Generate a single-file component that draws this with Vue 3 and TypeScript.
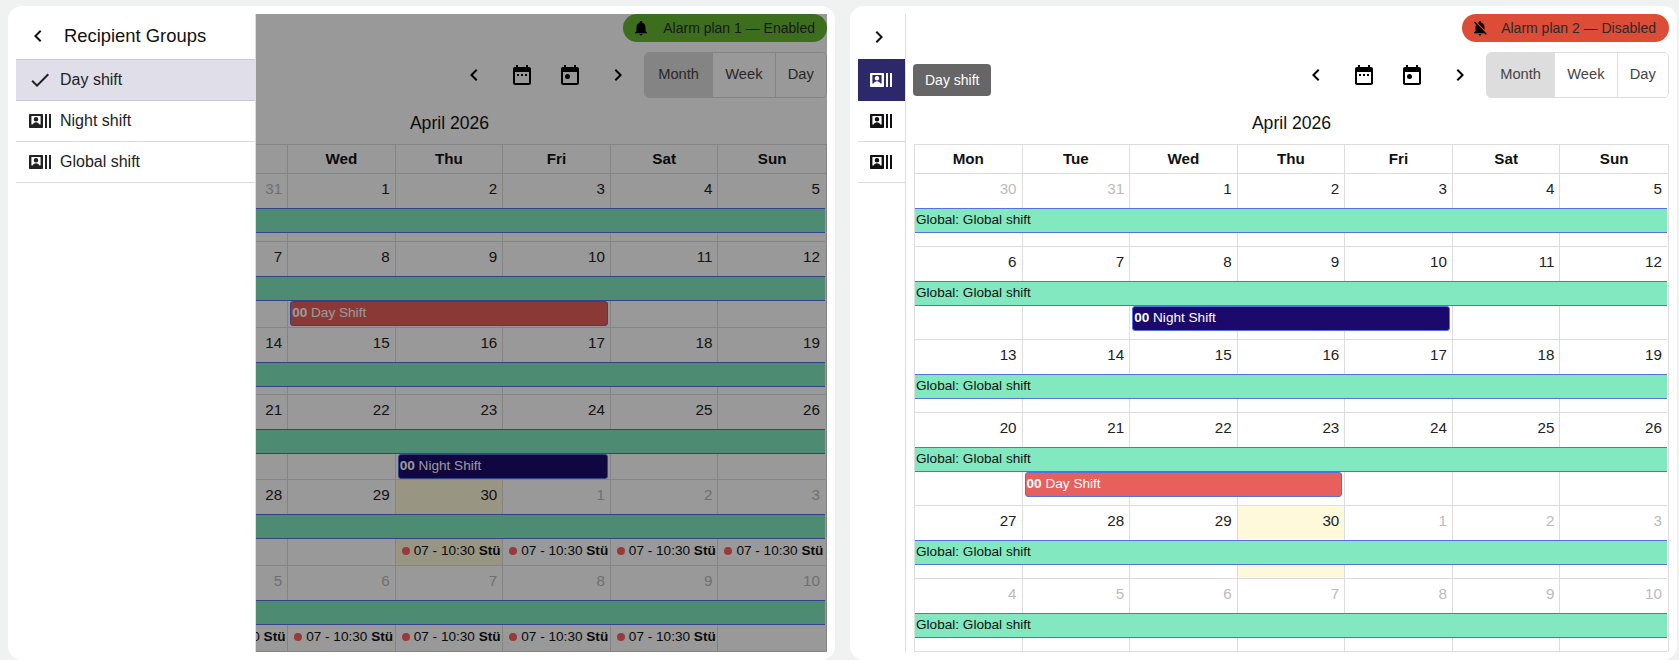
<script setup lang="ts">
interface Bar { start: number; end: number; label: string; tone: 'day' | 'night' }
interface Tick { col: number }
interface Week { height: number; days: { n: number; muted: boolean; today: boolean }[]; bars: Bar[]; ticks: Tick[] }
interface Plan { id: number; enabled: boolean; chip: string; tooltip: string; drawer: boolean; weeks: Week[] }

const ICONS = {
  back: 'M15.41 7.41L14 6l-6 6 6 6 1.41-1.41L10.83 12z',
  next: 'M10 6L8.59 7.41 13.17 12l-4.58 4.59L10 18l6-6z',
  actors: 'M21 5v14h2V5zM17 5v14h2V5zM14 5H2c-.55 0-1 .45-1 1v12c0 .55.45 1 1 1h12c.55 0 1-.45 1-1V6c0-.55-.45-1-1-1zM3.4 7h9.2v8.6H3.4zM8 7.9a2.3 2.3 0 1 1 0 4.6 2.3 2.3 0 0 1 0-4.6zM4.6 15.6c0-1.4 2.2-2.4 3.4-2.4s3.4 1 3.4 2.4z',
  check: 'M9 16.17L4.83 12l-1.41 1.41L9 19 21 7l-1.41-1.41z',
  range: 'M9 11H7v2h2v-2zm4 0h-2v2h2v-2zm4 0h-2v2h2v-2zm2-7h-1V2h-2v2H8V2H6v2H5c-1.11 0-1.99.9-1.99 2L3 20c0 1.1.89 2 2 2h14c1.1 0 2-.9 2-2V6c0-1.1-.9-2-2-2zm0 16H5V9h14v11z',
  today: 'M19 4h-1V2h-2v2H8V2H6v2H5c-1.11 0-1.99.9-1.99 2L3 20c0 1.1.89 2 2 2h14c1.1 0 2-.9 2-2V6c0-1.1-.9-2-2-2zm0 16H5V9h14v11zM9.5 11a2.5 2.5 0 1 0 0 5 2.5 2.5 0 0 0 0-5z',
  bell: 'M12 22c1.1 0 2-.9 2-2h-4c0 1.1.89 2 2 2zm6-6v-5c0-3.07-1.64-5.64-4.5-6.32V4c0-.83-.67-1.5-1.5-1.5s-1.5.67-1.5 1.5v.68C7.63 5.36 6 7.92 6 11v5l-2 2v1h16v-1l-2-2z',
  bellOff: 'M20 18.69L7.84 6.14 5.27 3.49 4 4.76l2.8 2.8v.01c-.52.99-.8 2.16-.8 3.42v5l-2 2v1h13.73l2 2L21 19.72l-1-1.03zM12 22c1.11 0 2-.89 2-2h-4c0 1.11.89 2 2 2zm6-7.32V11c0-3.08-1.64-5.64-4.5-6.32V4c0-.83-.67-1.5-1.5-1.5s-1.5.67-1.5 1.5v.68c-.15.03-.29.08-.42.12-.1.03-.2.07-.3.11h-.01c-.2.08-.4.17-.59.27-.01 0-.01 0-.02.01L18 14.68z',
}

const dayNames = ['Mon', 'Tue', 'Wed', 'Thu', 'Fri', 'Sat', 'Sun']
const groups = ['Day shift', 'Night shift', 'Global shift']
const views = ['Month', 'Week', 'Day']

function buildDays(): Week['days'][] {
  const out: Week['days'][] = []
  const prefix = [30, 31]
  const all: { n: number; muted: boolean; today: boolean }[] = prefix.map((n) => ({ n, muted: true, today: false }))
  for (let n = 1; n <= 30; n++) all.push({ n, muted: false, today: n === 30 })
  for (let n = 1; n <= 10; n++) all.push({ n, muted: true, today: false })
  for (let i = 0; i < 6; i++) out.push(all.slice(i * 7, i * 7 + 7))
  return out
}

const grid = buildDays()

function makeWeeks(heights: number[], bars: Record<number, Bar[]>, ticks: Record<number, number[]>): Week[] {
  return heights.map((height, i) => ({
    height,
    days: grid[i],
    bars: bars[i] ?? [],
    ticks: (ticks[i] ?? []).map((col) => ({ col })),
  }))
}

const plans: Plan[] = [
  {
    id: 1,
    enabled: true,
    chip: 'Alarm plan 1 — Enabled',
    tooltip: '',
    drawer: true,
    weeks: makeWeeks(
      [68, 86, 67, 85, 86, 86],
      {
        1: [{ start: 3, end: 6, label: 'Day Shift', tone: 'day' }],
        3: [{ start: 4, end: 6, label: 'Night Shift', tone: 'night' }],
      },
      { 4: [4, 5, 6, 7], 5: [1, 2, 3, 4, 5, 6] },
    ),
  },
  {
    id: 2,
    enabled: false,
    chip: 'Alarm plan 2 — Disabled',
    tooltip: 'Day shift',
    drawer: false,
    weeks: makeWeeks(
      [73, 93, 73, 93, 73, 73],
      {
        1: [{ start: 3, end: 6, label: 'Night Shift', tone: 'night' }],
        3: [{ start: 2, end: 5, label: 'Day Shift', tone: 'day' }],
      },
      {},
    ),
  },
]
</script>

<template>
  <div class="page">
    <section v-for="plan in plans" :key="plan.id" class="card">
      <aside class="rail">
        <div class="rail-head">
          <svg class="icon" viewBox="0 0 24 24"><path :d="ICONS.next" /></svg>
        </div>
        <div v-for="(g, i) in groups" :key="g" class="rail-row" :class="{ active: i === 0 }">
          <svg class="icon" viewBox="0 0 24 24"><path fill-rule="evenodd" :d="ICONS.actors" /></svg>
        </div>
      </aside>

      <div class="panel">
        <div class="chip-row">
          <div class="chip" :class="plan.enabled ? 'on' : 'off'">
            <svg class="chip-icon" viewBox="0 0 24 24"><path :d="plan.enabled ? ICONS.bell : ICONS.bellOff" /></svg>
            <span>{{ plan.chip }}</span>
          </div>
        </div>

        <div class="toolbar">
          <div v-if="plan.tooltip" class="tooltip">{{ plan.tooltip }}</div>
          <div class="nav">
            <button class="nav-btn"><svg class="icon" viewBox="0 0 24 24"><path :d="ICONS.back" /></svg></button>
            <button class="nav-btn"><svg class="icon" viewBox="0 0 24 24"><path :d="ICONS.range" /></svg></button>
            <button class="nav-btn"><svg class="icon" viewBox="0 0 24 24"><path :d="ICONS.today" /></svg></button>
            <button class="nav-btn"><svg class="icon" viewBox="0 0 24 24"><path :d="ICONS.next" /></svg></button>
          </div>
          <div class="views">
            <button v-for="(v, i) in views" :key="v" class="view" :class="{ selected: i === 0 }">{{ v }}</button>
          </div>
        </div>

        <div class="title">April 2026</div>

        <div class="calendar">
          <div class="head">
            <div v-for="d in dayNames" :key="d" class="head-cell">{{ d }}</div>
          </div>
          <div v-for="(week, w) in plan.weeks" :key="w" class="week" :style="{ height: week.height + 'px' }">
            <div
              v-for="(day, c) in week.days"
              :key="c"
              class="cell"
              :class="{ today: day.today }"
              :style="{ gridColumn: c + 1 }"
            >
              <span class="num" :class="{ muted: day.muted }">{{ day.n }}</span>
            </div>
            <div class="band">Global: Global shift</div>
            <div
              v-for="bar in week.bars"
              :key="bar.label"
              class="bar"
              :class="bar.tone"
              :style="{ gridColumn: bar.start + ' / ' + bar.end }"
            >
              <b>00</b> {{ bar.label }}
            </div>
            <div v-for="t in week.ticks" :key="t.col" class="tick" :style="{ gridColumn: t.col }">
              <i class="dot"></i>07 - 10:30 <b>Stü</b>
            </div>
          </div>
        </div>
      </div>

      <template v-if="plan.drawer">
        <div class="scrim"></div>
        <aside class="drawer">
          <div class="drawer-head">
            <svg class="icon" viewBox="0 0 24 24"><path :d="ICONS.back" /></svg>
            <span>Recipient Groups</span>
          </div>
          <div v-for="(g, i) in groups" :key="g" class="drawer-row" :class="{ active: i === 0 }">
            <svg class="icon" viewBox="0 0 24 24"><path fill-rule="evenodd" :d="i === 0 ? ICONS.check : ICONS.actors" /></svg>
            <span>{{ g }}</span>
          </div>
        </aside>
      </template>
    </section>
  </div>
</template>

<style scoped>
.page {
  display: flex;
  gap: 15px;
  padding: 6px 2px 0 8px;
  height: 660px;
  box-sizing: border-box;
  overflow: hidden;
  background: #f0f2f1;
  font-family: "Liberation Sans", Arial, sans-serif;
  color: #111;
}
.card {
  position: relative;
  flex: 1 1 0;
  min-width: 0;
  display: flex;
  gap: 8px;
  height: 654px;
  box-sizing: border-box;
  padding: 8px;
  background: #fff;
  border-radius: 14px;
}
.icon {
  width: 24px;
  height: 24px;
  flex: none;
  display: block;
  fill: currentColor;
}
.rail {
  width: 48px;
  flex: none;
  box-sizing: border-box;
  border-right: 1px solid #ddd;
}
.rail-head {
  height: 45px;
  display: flex;
  align-items: center;
  padding-left: 9px;
  box-sizing: border-box;
}
.rail-row {
  width: 47px;
  height: 41px;
  box-sizing: border-box;
  display: flex;
  align-items: center;
  padding-left: 11px;
  border-bottom: 1px solid #ddd;
}
.rail-row.active {
  height: 42px;
  background: #2d2869;
  color: #fff;
  border-bottom: 0;
}
.panel {
  flex: 1 1 0;
  min-width: 0;
  display: flex;
  flex-direction: column;
}
.chip-row {
  display: flex;
  justify-content: flex-end;
  height: 28px;
}
.chip {
  display: flex;
  align-items: center;
  height: 28px;
  padding: 0 13px 0 9px;
  border-radius: 14px;
  font-size: 14px;
  color: #2b2b2b;
  white-space: nowrap;
}
.chip.on { background: #64b832; padding-right: 12px; }
.chip.off { background: #dc4c36; }
.chip-icon {
  width: 18px;
  height: 18px;
  margin-right: 13px;
  fill: #000;
}
.chip.off .chip-icon { margin-right: 12px; }
.toolbar {
  display: flex;
  justify-content: flex-end;
  align-items: center;
  height: 46px;
  margin-top: 10px;
}
.tooltip {
  align-self: flex-end;
  margin: 0 auto 2px -1px;
  height: 32px;
  line-height: 32px;
  padding: 0 12px;
  border-radius: 4px;
  background: #666;
  color: #fff;
  font-size: 14px;
}
.nav {
  display: flex;
  margin-right: 2px;
}
.nav-btn {
  width: 48px;
  height: 46px;
  padding: 0;
  display: flex;
  align-items: center;
  justify-content: center;
  background: none;
  border: 0;
  color: #000;
}
.views {
  display: grid;
  grid-template-columns: 68fr 63fr 52fr;
  width: 183px;
  height: 46px;
  box-sizing: border-box;
  border: 1px solid #ddd;
  border-radius: 5px;
  overflow: hidden;
}
.view {
  padding: 0 0 2px;
  background: #fff;
  border: 0;
  border-left: 1px solid #ddd;
  font: 14.67px "Liberation Sans", Arial, sans-serif;
  color: #444;
}
.view:first-child { border-left: 0; }
.view.selected { background: #ddd; }
.title {
  height: 46px;
  box-sizing: border-box;
  padding-top: 5px;
  display: flex;
  align-items: center;
  justify-content: center;
  font-size: 17.6px;
}
.calendar {
  border: 1px solid #ddd;
  border-bottom: 0;
  font-size: 13.6px;
}
.head {
  display: grid;
  grid-template-columns: repeat(7, minmax(0, 1fr));
  height: 29px;
  box-sizing: border-box;
  border-bottom: 1px solid #ddd;
}
.head-cell {
  display: flex;
  align-items: center;
  justify-content: center;
  padding-bottom: 2px;
  border-right: 1px solid #ddd;
  font-weight: 700;
  font-size: 15.2px;
}
.head-cell:last-child { border-right: 0; }
.week {
  display: grid;
  grid-template-columns: repeat(7, minmax(0, 1fr));
  grid-template-rows: 34px 25px minmax(0, 1fr);
  box-sizing: border-box;
}
.cell {
  grid-row: 1 / 4;
  box-sizing: border-box;
  padding: 5px 5px 0 0;
  text-align: right;
  border-right: 1px solid #ddd;
  border-bottom: 1px solid #ddd;
}
.cell:nth-child(7) {
  border-right: 0;
  margin-right: 1px;
}
.cell.today { background: #fdf9da; }
.num {
  display: block;
  line-height: 20px;
  font-size: 15.2px;
  color: #222;
}
.num.muted { color: #bbb; }
.band {
  grid-row: 2;
  grid-column: 1 / -1;
  margin-right: 1px;
  box-sizing: border-box;
  padding-left: 1px;
  line-height: 21px;
  background: #82e8c0;
  border-top: 1px solid #5570e0;
  border-bottom: 1px solid #5570e0;
  color: #111;
}
.bar {
  grid-row: 3;
  align-self: start;
  height: 25px;
  box-sizing: border-box;
  margin: 0 3px 0 2px;
  padding-left: 1px;
  line-height: 22px;
  border: 1px solid #5570e0;
  border-radius: 3px;
  color: #fff;
  white-space: nowrap;
  overflow: hidden;
}
.bar.day { background: #e7605c; }
.bar.night { background: #1b0a6c; }
.tick {
  grid-row: 3;
  align-self: center;
  margin-bottom: 4px;
  padding-left: 6px;
  font-size: 13.6px;
  white-space: nowrap;
  overflow: hidden;
  color: #111;
}
.dot {
  display: inline-block;
  width: 8px;
  height: 8px;
  margin-right: 4px;
  border-radius: 50%;
  background: #ff6060;
}
.scrim {
  position: absolute;
  inset: 8px;
  background: rgba(0, 0, 0, 0.4);
}
.drawer {
  position: absolute;
  left: 8px;
  top: 8px;
  bottom: 8px;
  width: 240px;
  box-sizing: border-box;
  background: #fff;
  border-right: 1px solid #ddd;
}
.drawer-head {
  height: 46px;
  box-sizing: border-box;
  display: flex;
  align-items: center;
  gap: 14px;
  padding: 0 0 1px 10px;
  font-size: 18.4px;
  color: #111;
  border-bottom: 1px solid #ccc;
}
.drawer-row {
  height: 41px;
  box-sizing: border-box;
  display: flex;
  align-items: center;
  gap: 8px;
  padding-left: 12px;
  font-size: 16px;
  color: #222;
  border-bottom: 1px solid #ddd;
}
.drawer-row.active {
  background: #e0dfe9;
  border-bottom-color: #c9c8d4;
}
</style>
